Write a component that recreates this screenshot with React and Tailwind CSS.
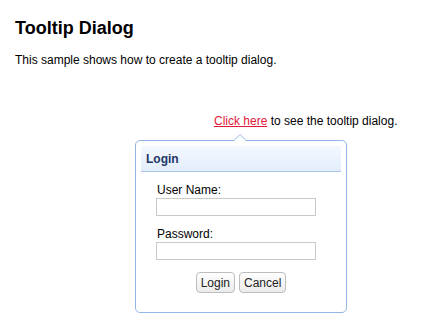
import React from "react";

const Arrow = () => (
  <svg
    className="absolute top-[-7px] left-[97px]"
    width="14"
    height="8"
    viewBox="0 0 14 8"
  >
    <polygon points="0.5,7.5 7,1 13.5,7.5" fill="#ffffff" />
    <polyline
      points="1,6.5 7,0.5 13,6.5"
      fill="none"
      stroke="#94b5e5"
      strokeWidth="1"
    />
  </svg>
);

const LoginDialog = () => (
  <div className="relative ml-[120px] mt-[11px] w-[212px] h-[173px] rounded-[5px] border border-[#94b5e5] bg-white p-[5px]">
    <Arrow />
    {/* header */}
    <div className="flex h-[26px] items-center border-b border-[#a9c5ec] bg-gradient-to-b from-[#f4f8fe] to-[#e3edfc] pl-[5px] font-bold text-[#1c3766]">
      Login
    </div>

    {/* body */}
    <div className="px-[15px]">
      <label className="mt-[11px] block pl-px leading-[15px]">User Name:</label>
      <input
        type="text"
        className="block h-[18px] w-[160px] border border-[#c9c9c9] bg-white outline-none"
      />
      <label className="mt-[10px] block pl-px leading-[16px]">Password:</label>
      <input
        type="password"
        className="block h-[18px] w-[160px] border border-[#c9c9c9] bg-white outline-none"
      />
      <div className="mt-[12px] flex justify-center gap-[4px]">
        <button className="h-[21px] rounded-[4px] border border-[#bdbdbd] bg-gradient-to-b from-white to-[#ebebeb] px-[4px] leading-none text-[#222]">
          Login
        </button>
        <button className="h-[21px] rounded-[4px] border border-[#bdbdbd] bg-gradient-to-b from-white to-[#ebebeb] px-[4px] leading-none text-[#222]">
          Cancel
        </button>
      </div>
    </div>
  </div>
);

export default function App() {
  return (
    <div className="min-h-[329px] bg-white px-[15px] pt-[18px] font-['Liberation_Sans',Arial,sans-serif] text-[12px] leading-[16px] text-black">
      <h1 className="text-[18px] font-bold leading-[21px]">Tooltip Dialog</h1>
      <p className="mt-[13px]">
        This sample shows how to create a tooltip dialog.
      </p>

      <div className="mt-[45px] pl-[199px]">
        <a href="#" className="text-[#e21a3a] underline">
          Click here
        </a>{" "}
        to see the tooltip dialog.
      </div>

      <LoginDialog />
    </div>
  );
}
